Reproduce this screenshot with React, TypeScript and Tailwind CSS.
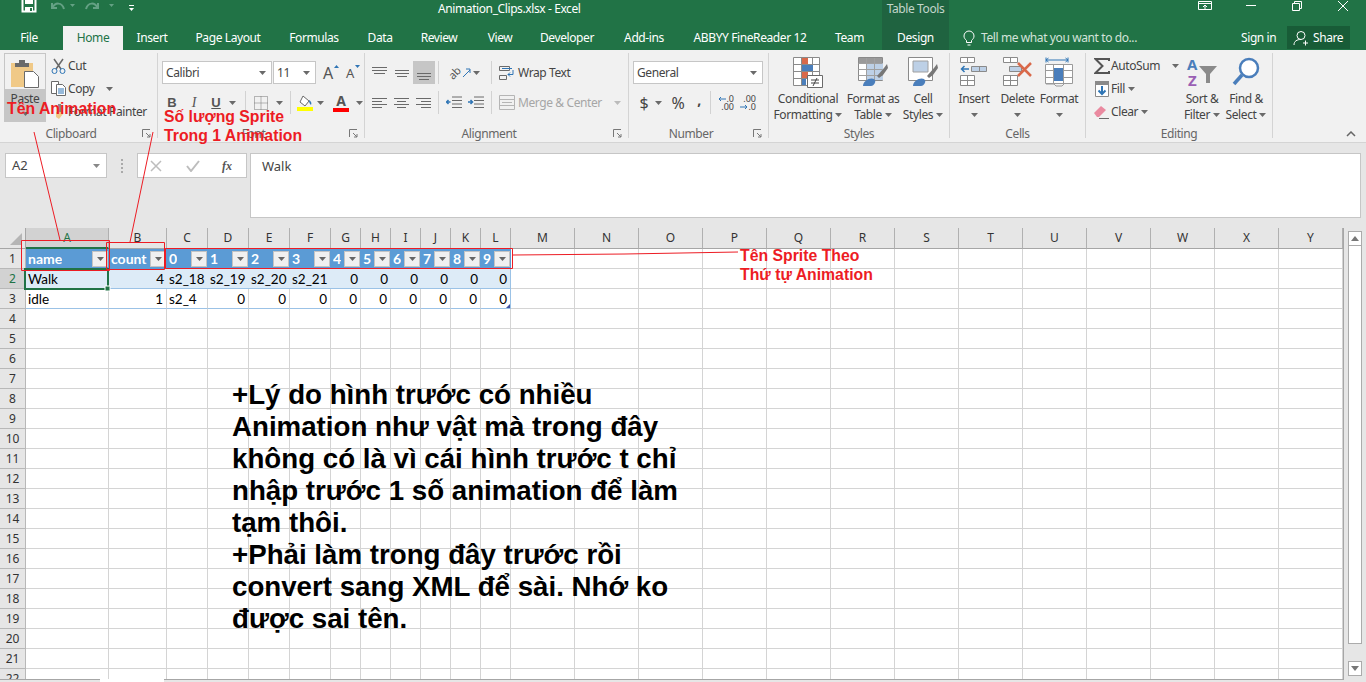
import type { ReactNode } from 'react';

const ui = "font-['Noto_Sans',sans-serif] tracking-[-0.4px]";
const liberation = "font-['Liberation_Sans',sans-serif] tracking-normal";
const columns = ['A','B','C','D','E','F','G','H','I','J','K','L','M','N','O','P','Q','R','S','T','U','V','W','X','Y'];
const tabs = [
  { label: 'Insert', w: 'w-[58px]' },
  { label: 'Page Layout', w: 'w-[94px]' },
  { label: 'Formulas', w: 'w-[78px]' },
  { label: 'Data', w: 'w-[54px]' },
  { label: 'Review', w: 'w-[64px]' },
  { label: 'View', w: 'w-[58px]' },
  { label: 'Developer', w: 'w-[76px]' },
  { label: 'Add-ins', w: 'w-[78px]' },
  { label: 'ABBYY FineReader 12', w: 'w-[134px]' },
  { label: 'Team', w: 'w-[65px]' },
];
const row2 = ['Walk', '4', 's2_18', 's2_19', 's2_20', 's2_21', '0', '0', '0', '0', '0', '0'];
const row3 = ['idle', '1', 's2_4', '0', '0', '0', '0', '0', '0', '0', '0', '0'];
const note = [
  '+Lý do hình trước có nhiều',
  'Animation như vật mà trong đây',
  'không có là vì cái hình trước t chỉ',
  'nhập trước 1 số animation để làm',
  'tạm thôi.',
  '+Phải làm trong đây trước rồi',
  'convert sang XML để sài. Nhớ ko',
  'được sai tên.',
];

function Caret({ color = '#6a6a6a' }: { color?: string }) {
  return (
    <svg width="7" height="4" viewBox="0 0 7 4" className="shrink-0">
      <path d="M0 0h7L3.500 4z" fill={color} />
    </svg>
  );
}

function Launcher() {
  return (
    <svg width="9" height="9" viewBox="0 0 9 9">
      <path d="M.5 8V.5H8M4 4l4 4M8 5v3H5" fill="none" stroke="#777" />
    </svg>
  );
}

function Lines({ rows, color = '#6a6a6a' }: { rows: number[][]; color?: string }) {
  return (
    <svg width="16" height="16" viewBox="0 0 16 16">
      {rows.map(([a, b, y]) => (
        <path key={`${a}-${y}`} d={`M${a} ${y}.5H${b}`} stroke={color} />
      ))}
    </svg>
  );
}

function Sep() {
  return <div className="w-px h-[23px] bg-[#d2d2d2] shrink-0" />;
}

function Group({ w, label, launcher = true, children }: { w: string; label: string; launcher?: boolean; children: ReactNode }) {
  return (
    <div className={`${w} h-[85px] flex flex-col border-r border-[#d4d4d4] shrink-0`}>
      <div className="h-[76px] flex shrink-0">{children}</div>
      <div className="h-[9px] flex items-center">
        <span className="flex-1 text-center text-[12px] leading-[12px] text-[#666]">{label}</span>
        {launcher && <span className="w-[14px] flex mr-[1px]"><Launcher /></span>}
      </div>
    </div>
  );
}

function BigButton({ w, icon, lines, caretOnly }: { w: string; icon: ReactNode; lines: string[]; caretOnly?: boolean }) {
  return (
    <div className={`${w} pt-[4px] flex flex-col items-center shrink-0 text-[12px] leading-[16px] text-[#444]`}>
      <div className="h-[34px] flex items-start justify-center">{icon}</div>
      {lines.map((t, i) => (
        <div key={t} className="flex items-center gap-[3px] whitespace-nowrap h-[16px]">
          {t}
          {i === lines.length - 1 && !caretOnly && <Caret />}
        </div>
      ))}
      {caretOnly && <div className="h-[16px] flex items-center"><Caret /></div>}
    </div>
  );
}

function SmallRow({ icon, label, caret, gap = 'ml-[3px]' }: { icon: ReactNode; label: string; caret?: boolean; gap?: string }) {
  return (
    <div className="h-[23px] flex items-center text-[12px] text-[#444] whitespace-nowrap">
      <span className="w-[19px] flex justify-center shrink-0">{icon}</span>
      {label}
      {caret && <span className={`${gap} flex`}><Caret /></span>}
    </div>
  );
}

function TableHead({ label }: { label: string }) {
  return (
    <div className="h-full bg-[#5b9bd5] flex items-center justify-between pl-[2px] pr-[1px] text-white font-bold text-[14px]">
      <span className="truncate leading-[17px] pb-[1px]">{label}</span>
      <span className="w-[16px] h-[16px] bg-[#f0f0f0] border border-[#c4c4c4] flex items-center justify-center shrink-0">
        <Caret color="#666" />
      </span>
    </div>
  );
}

export default function App() {
  return (
    <div className={`relative w-[1366px] h-[682px] overflow-hidden flex flex-col bg-white ${ui}`}>
      {/* title bar */}
      <div className="h-[26px] bg-[#217346] flex text-white text-[12px] shrink-0 overflow-hidden">
        <div className="w-[438px] flex items-start shrink-0">
          <svg width="16" height="14" viewBox="0 0 16 14" className="ml-[21px] -mt-[1px]">
            <path d="M1.500 0v12.500h13V0" fill="none" stroke="#fff" strokeWidth="2" />
            <path d="M4 0h8v5H4zM4 8h8v5H4z" fill="#fff" />
            <path d="M9 9h2v3H9z" fill="#217346" />
          </svg>
          <svg width="60" height="14" viewBox="0 0 60 14" className="ml-[12px]">
            <path d="M3 3v5h5M3.500 8C6 2 13 2 15 9" fill="none" stroke="#64a184" strokeWidth="2" />
            <path d="M21 4h5l-2.500 3z" fill="#64a184" />
            <path d="M49 3v5h-5M48.500 8C46 2 39 2 37 9" fill="none" stroke="#64a184" strokeWidth="2" />
          </svg>
          <svg width="30" height="14" viewBox="0 0 30 14" className="-ml-[1px]">
            <path d="M1 4h5L3.500 7z" fill="#64a184" />
            <path d="M21 5.500h5" stroke="#fff" />
            <path d="M21 8h5l-2.500 3z" fill="#fff" />
          </svg>
        </div>
        <div className="w-[444px] leading-[17px] shrink-0">Animation_Clips.xlsx - Excel</div>
        <div className="w-[67px] bg-[#1f6340] text-[#c3d6cb] text-center leading-[17px] shrink-0">Table Tools</div>
        <div className="flex-1 flex justify-end items-start">
          <svg width="168" height="12" viewBox="0 0 168 12">
            <path d="M.5 1.500h13v8H.5zM.5 3.500h13" fill="none" stroke="#fff" />
            <path d="M7 9V5M5 7l2-2 2 2" fill="none" stroke="#fff" />
            <path d="M48 5.500h10" stroke="#fff" />
            <path d="M94.500 3.500h7v7h-7zM96.500 3V1.500h7v7H102" fill="none" stroke="#fff" />
            <path d="M140 1l10 10M150 1l-10 10" stroke="#fff" />
          </svg>
        </div>
      </div>
      {/* tabs */}
      <div className="h-[24px] bg-[#217346] flex text-white text-[12px] shrink-0">
        <div className="w-[63px] pr-[5px] text-center leading-[24px] shrink-0">File</div>
        <div className="w-[60px] bg-[#f1f1f1] text-[#217346] text-center leading-[24px] shrink-0">Home</div>
        {tabs.map(t => (
          <div key={t.label} className={`${t.w} text-center leading-[24px] whitespace-nowrap shrink-0`}>{t.label}</div>
        ))}
        <div className="w-[67px] bg-[#1f6340] text-center leading-[24px] shrink-0">Design</div>
        <div className="flex items-center pl-[13px] text-[#d3e3da] w-[292px] shrink-0">
          <svg width="14" height="16" viewBox="0 0 14 16" className="mr-[5px]">
            <path d="M4.500 10.500C3 9 2 8 2 6a5 5 0 0 1 10 0c0 2-1 3-2.500 4.500v2h-5zM5.500 15h3" fill="none" stroke="#fff" />
          </svg>
          Tell me what you want to do...
        </div>
        <div className="w-[46px] leading-[24px] whitespace-nowrap shrink-0">Sign in</div>
        <div className="w-[63px] h-[23px] bg-[#185c37] flex items-center pl-[6px] gap-[4px] shrink-0">
          <svg width="16" height="16" viewBox="0 0 16 16">
            <circle cx="8" cy="5.500" r="4" fill="none" stroke="#fff" />
            <path d="M1 15c0-4 3-5.500 7-5.500M10 13h5M12.500 10.500v5" fill="none" stroke="#fff" />
          </svg>
          Share
        </div>
      </div>
      {/* ribbon */}
      <div className="h-[93px] bg-[#f1f1f1] border-b border-[#d4d4d4] flex pt-[3px] shrink-0">
        <Group w="w-[158px]" label="Clipboard">
          <div className="ml-[4px] w-[42px] h-[69px] border border-[#c6c6c6] flex flex-col shrink-0">
            <div className="h-[35px] flex justify-center pt-[4px]">
              <svg width="30" height="30" viewBox="0 0 30 30">
                <path d="M1 5h22v24H1z" fill="#f0c987" />
                <path d="M5 5h14v4H5zM9 2h6v4H9z" fill="#6a6a6a" />
                <path d="M14.500 13.500h9l5 5v11h-14z" fill="#fff" stroke="#6a6a6a" />
              </svg>
            </div>
            <div className="flex-1 bg-[#c6c6c6] text-[12px] text-[#444] flex flex-col items-center leading-[18px] pt-[1px]">
              Paste
              <div className="mt-[4px]"><Caret /></div>
            </div>
          </div>
          <div className="ml-[3px] pt-[1px]">
            <SmallRow
              label="Cut"
              icon={
                <svg width="15" height="16" viewBox="0 0 15 16">
                  <path d="M3 1l7 10M12 1L5 11" stroke="#6a6a6a" strokeWidth="1.500" fill="none" />
                  <circle cx="3.500" cy="13" r="2.500" fill="none" stroke="#2f75b5" />
                  <circle cx="11.500" cy="13" r="2.500" fill="none" stroke="#2f75b5" />
                </svg>
              }
            />
            <SmallRow
              label="Copy"
              caret
              gap="ml-[11px]"
              icon={
                <svg width="15" height="15" viewBox="0 0 15 15">
                  <path d="M.5.500h7v12h-7z" fill="#fff" stroke="#6a6a6a" />
                  <path d="M5.500 3.500h6l3 3v8h-9z" fill="#fff" stroke="#6a6a6a" />
                  <path d="M7 8h6M7 10h6M7 12h6" stroke="#2f75b5" />
                </svg>
              }
            />
            <SmallRow
              label="Format Painter"
              icon={
                <svg width="12" height="15" viewBox="0 0 12 15">
                  <path d="M3 8h7v2l-4 5-3-2z" fill="#f0c987" />
                  <path d="M5 0h3v8H5z" fill="#8a8a8a" />
                </svg>
              }
            />
          </div>
        </Group>
        <Group w="w-[207px]" label="Font">
          <div className="pt-[8px] pl-[4px]">
            <div className="flex items-center">
              <div className="w-[110px] h-[23px] bg-white border border-[#c6c6c6] flex items-center justify-between pl-[3px] pr-[5px] text-[12px] text-[#444]">Calibri<Caret /></div>
              <div className="w-[43px] h-[23px] ml-px bg-white border border-[#c6c6c6] flex items-center justify-between pl-[3px] pr-[5px] text-[12px] text-[#444]">11<Caret /></div>
              <div className="relative w-[22px] ml-[1px] text-center text-[#555] text-[16px] leading-[22px]">A
                <svg width="5" height="3" viewBox="0 0 5 3" className="absolute right-[0px] top-[3px]"><path d="M0 3h5L2.500 0z" fill="#2f75b5" /></svg>
              </div>
              <div className="relative w-[22px] text-center text-[#555] text-[13px] leading-[22px]">A
                <svg width="5" height="3" viewBox="0 0 5 3" className="absolute right-[1px] top-[3px]"><path d="M0 0h5L2.500 3z" fill="#2f75b5" /></svg>
              </div>
            </div>
            <div className="flex items-center mt-[7px] h-[23px] text-[#555]">
              <span className={`w-[22px] ml-[-1px] text-center text-[13px] font-bold ${liberation}`}>B</span>
              <span className="w-[22px] text-center text-[14px] italic font-['Liberation_Serif',serif]">I</span>
              <span className={`w-[22px] text-center text-[13px] font-bold underline ${liberation}`}>U</span>
              <span className="w-[14px] pl-[2px] flex"><Caret /></span>
              <span className="ml-[4px]"><Sep /></span>
              <span className="w-[26px] ml-[2px] flex justify-center">
                <svg width="14" height="14" viewBox="0 0 14 14">
                  <path d="M.5.500h13v13H.5zM7 .5v13M.5 7h13" fill="none" stroke="#777" strokeDasharray="1 1" />
                </svg>
              </span>
              <span className="w-[14px] pl-[2px] flex"><Caret /></span>
              <span className="ml-[2px]"><Sep /></span>
              <span className="w-[24px] ml-[2px] flex justify-center">
                <svg width="16" height="16" viewBox="0 0 16 16">
                  <path d="M6 1l6 5-4 5-5-4z" fill="#fff" stroke="#6a6a6a" />
                  <path d="M12 5c2 1 3 3 2 5-1-1-2-2-2-5z" fill="#2f75b5" />
                  <path d="M0 12h16v4H0z" fill="#ffff00" />
                </svg>
              </span>
              <span className="w-[12px] flex"><Caret /></span>
              <span className="w-[22px] ml-[1px] flex flex-col items-center text-[14px] leading-[13px] font-bold">
                A
                <span className="w-[16px] h-[4px] bg-[#ff0000] mt-[1px]" />
              </span>
              <span className="ml-[4px] flex"><Caret /></span>
            </div>
          </div>
        </Group>
        <Group w="w-[264px]" label="Alignment">
          <div className="pt-[8px] pl-[4px]">
            <div className="flex items-center h-[23px]">
              <span className="w-[22px] flex justify-center"><Lines rows={[[0,15,2],[0,15,5],[2,13,8]]} /></span>
              <span className="w-[22px] flex justify-center"><Lines rows={[[1,15,5],[1,15,8],[3,13,11]]} /></span>
              <span className="w-[22px] h-[23px] bg-[#c6c6c6] flex justify-center items-center"><Lines rows={[[1,15,8],[1,15,11],[3,13,14]]} /></span>
              <span className="ml-[3px]"><Sep /></span>
              <span className="w-[17px] ml-[7px] h-[16px] flex items-center justify-center -rotate-45 text-[11px] leading-[10px] text-[#555]">ab</span>
              <svg width="8" height="10" viewBox="0 0 8 10"><path d="M0 9l7-7M3 1h4v4" fill="none" stroke="#2f75b5" /></svg>
              <span className="ml-[2px] flex"><Caret /></span>
              <span className="ml-[11px]"><Sep /></span>
              <span className="ml-[7px] flex items-center text-[12px] text-[#444] whitespace-nowrap gap-[3px]">
                <svg width="16" height="16" viewBox="0 0 16 16">
                  <path d="M.5 1.500h10v4H.5zM.5 10.500h7v4h-7z" fill="none" stroke="#6a6a6a" />
                  <path d="M3 3.500h10M14 5v4.500H9M11 7.500l-2 2 2 2" fill="none" stroke="#2f75b5" />
                </svg>
                Wrap Text
              </span>
            </div>
            <div className="flex items-center h-[23px] mt-[7px]">
              <span className="w-[22px] flex justify-center"><Lines rows={[[0,15,3],[0,10,6],[0,15,9],[0,10,12]]} /></span>
              <span className="w-[22px] flex justify-center"><Lines rows={[[0,15,3],[3,12,6],[0,15,9],[3,12,12]]} /></span>
              <span className="w-[22px] flex justify-center"><Lines rows={[[0,15,3],[5,15,6],[0,15,9],[5,15,12]]} /></span>
              <span className="ml-[3px]"><Sep /></span>
              <span className="ml-[7px] flex">
                <svg width="16" height="14" viewBox="0 0 16 14">
                  <path d="M6 1h10M6 4.500h10M6 8h10M6 11.500h10" stroke="#6a6a6a" />
                  <path d="M0 6h4.500M2.500 4L.5 6l2 2" fill="none" stroke="#2f75b5" strokeWidth="1.500" />
                </svg>
              </span>
              <span className="ml-[6px] flex">
                <svg width="16" height="14" viewBox="0 0 16 14">
                  <path d="M6 1h10M6 4.500h10M6 8h10M6 11.500h10" stroke="#6a6a6a" />
                  <path d="M0 6h4.500M2.500 4l2 2-2 2" fill="none" stroke="#2f75b5" strokeWidth="1.500" />
                </svg>
              </span>
              <span className="ml-[7px]"><Sep /></span>
              <span className="ml-[7px] flex items-center text-[12px] text-[#a6a6a6] whitespace-nowrap gap-[3px]">
                <svg width="16" height="15" viewBox="0 0 16 15">
                  <path d="M.5.500h15v14H.5zM.5 4.500h15M.5 10.500h15" fill="none" stroke="#b5b5b5" />
                  <path d="M3 7.500h10" stroke="#b5b5b5" />
                </svg>
                Merge &amp; Center
                <span className="ml-[9px] flex"><Caret color="#bbb" /></span>
              </span>
            </div>
          </div>
        </Group>
        <Group w="w-[140px]" label="Number">
          <div className="pt-[8px] pl-[4px]">
            <div className="w-[130px] h-[23px] bg-white border border-[#c6c6c6] flex items-center justify-between pl-[3px] pr-[5px] text-[12px] text-[#444]">General<Caret /></div>
            <div className="flex items-center h-[23px] mt-[7px] text-[#444]">
              <span className="w-[16px] ml-[3px] text-center text-[16px]">$</span>
              <span className="ml-[3px] flex"><Caret /></span>
              <span className="w-[18px] ml-[7px] text-center text-[16px]">%</span>
              <span className="w-[10px] ml-[7px] text-center font-bold text-[14px] leading-[14px] -mt-[6px]">,</span>
              <span className="ml-[6px]"><Sep /></span>
              <span className="ml-[7px] w-[16px] relative text-[9px] leading-[8px] text-right text-[#444] tracking-normal">
                <svg width="8" height="6" viewBox="0 0 8 6" className="absolute left-0 top-[1px]"><path d="M8 3H1M3 1L1 3l2 2" fill="none" stroke="#2f75b5" /></svg>
                <div>.0</div><div>.00</div>
              </span>
              <span className="ml-[6px] w-[16px] relative text-[9px] leading-[8px] text-right text-[#444] tracking-normal">
                <svg width="8" height="6" viewBox="0 0 8 6" className="absolute left-0 bottom-[1px]"><path d="M0 3h7M5 1l2 2-2 2" fill="none" stroke="#2f75b5" /></svg>
                <div>.00</div><div>.0</div>
              </span>
            </div>
          </div>
        </Group>
        <Group w="w-[181px]" label="Styles" launcher={false}>
          <BigButton
            w="w-[78px]"
            lines={['Conditional', 'Formatting']}
            icon={
              <svg width="30" height="31" viewBox="0 0 30 31">
                <path d="M.5.500h26v28H.5zM.5 7.500h26M.5 14.500h26M.5 21.500h26M8.500.5v28M19.500.5v28" fill="#fff" stroke="#8a8a8a" />
                <path d="M9 1h6v6H9zM9 15h6v6H9z" fill="#d9694a" />
                <path d="M9 8h11v6H9zM9 22h4v6H9z" fill="#4a7ebb" />
                <path d="M14.500 18.500h15v12h-15z" fill="#fff" stroke="#6a6a6a" />
                <path d="M18 23h8M18 26h8M24 21l-4 8" fill="none" stroke="#444" />
              </svg>
            }
          />
          <BigButton
            w="w-[52px]"
            lines={['Format as', 'Table']}
            icon={
              <svg width="30" height="30" viewBox="0 0 30 30">
                <path d="M.5 .5h24v23H.5z" fill="#fff" stroke="#8a8a8a" />
                <path d="M1 1h23v5H1z" fill="#9a9a9a" />
                <path d="M8 6h17v17H8z" fill="#bdd0e6" />
                <path d="M.5 6.500h24M.5 12.500h24M.5 18.500h24M8.500 1v22M16.500 1v22" stroke="#a0a0a0" fill="none" />
                <path d="M19 19l7-8 3-4 1 4-5 7-4 3z" fill="#777" />
                <path d="M5 29c0-5 7-9 11-7 3 2 0 7-3 7z" fill="#4a7ebb" />
              </svg>
            }
          />
          <BigButton
            w="w-[48px]"
            lines={['Cell', 'Styles']}
            icon={
              <svg width="30" height="30" viewBox="0 0 30 30">
                <path d="M.5 .5h24v23H.5z" fill="#fff" stroke="#8a8a8a" />
                <path d="M5 4h15v11H5z" fill="#bdd0e6" stroke="#a0a0a0" />
                <path d="M19 19l7-8 3-4 1 4-5 7-4 3z" fill="#777" />
                <path d="M5 29c0-5 7-9 11-7 3 2 0 7-3 7z" fill="#4a7ebb" />
              </svg>
            }
          />
        </Group>
        <Group w="w-[136px]" label="Cells" launcher={false}>
          <BigButton
            w="w-[48px]"
            lines={['Insert']}
            caretOnly
            icon={
              <svg width="28" height="30" viewBox="0 0 28 30">
                <path d="M.5.500h14v5H.5zM7.500.5v5M.5 18.500h14v10H.5zM.5 23.500h14M7.500 18.500v10" fill="#fff" stroke="#8a8a8a" />
                <path d="M11.500 9.500h15v5h-15zM19.500 9.500v5" fill="#bdd0e6" stroke="#8a8a8a" />
                <path d="M9 12H2M4.500 9L1.500 12l3 3" fill="none" stroke="#2f75b5" strokeWidth="1.500" />
              </svg>
            }
          />
          <BigButton
            w="w-[39px]"
            lines={['Delete']}
            caretOnly
            icon={
              <svg width="30" height="30" viewBox="0 0 30 30">
                <path d="M.5.500h14v5H.5zM7.500.5v5M.5 18.500h14v10H.5zM.5 23.500h14M7.500 18.500v10" fill="#fff" stroke="#8a8a8a" />
                <path d="M6.500 9.500h12v5h-12z" fill="#bdd0e6" stroke="#8a8a8a" />
                <path d="M15 6l13 13M28 6L15 19" stroke="#d9694a" strokeWidth="2.500" />
              </svg>
            }
          />
          <BigButton
            w="w-[44px]"
            lines={['Format']}
            caretOnly
            icon={
              <svg width="28" height="30" viewBox="0 0 28 30">
                <path d="M1 3h22M1 .5v5M23 .5v5M3.500 1L1 3l2.500 2M20.500 1L23 3l-2.500 2" fill="none" stroke="#2f75b5" />
                <path d="M.5 7.500h27v19H.5zM.5 13.500h27M.5 20.500h27M8.500 7.500v19M18.500 7.500v19" fill="#fff" stroke="#9a9a9a" />
                <path d="M9 11h9v13H9z" fill="#4a7ebb" />
                <path d="M1 27h8l2 2h6l2-2" fill="none" stroke="#9a9a9a" />
              </svg>
            }
          />
        </Group>
        <Group w="w-[187px]" label="Editing" launcher={false}>
          <div className="w-[94px] pl-[6px] pt-[1px] shrink-0">
            <SmallRow
              label="AutoSum"
              caret
              gap="ml-[12px]"
              icon={
                <svg width="16" height="16" viewBox="0 0 16 16">
                  <path d="M15 3V1H1.500l7 7-7 7H15v-2" fill="none" stroke="#555" strokeWidth="2" />
                </svg>
              }
            />
            <SmallRow
              label="Fill"
              caret
              icon={
                <svg width="14" height="16" viewBox="0 0 14 16">
                  <path d="M.5.500h13v15H.5z" fill="#fff" stroke="#8a8a8a" />
                  <path d="M0 0h14v4H0z" fill="#8a8a8a" />
                  <path d="M7 5v8M3.500 9.500L7 13l3.500-3.500" fill="none" stroke="#2f75b5" strokeWidth="2" />
                </svg>
              }
            />
            <SmallRow
              label="Clear"
              caret
              icon={
                <svg width="15" height="14" viewBox="0 0 15 14">
                  <path d="M0 8l7-7 5 4-7 7H3z" fill="#ea8aa0" />
                  <path d="M5 13.500h10" stroke="#6a6a6a" />
                </svg>
              }
            />
          </div>
          <BigButton
            w="w-[44px]"
            lines={['Sort &', 'Filter']}
            icon={
              <svg width="30" height="30" viewBox="0 0 30 30" className="overflow-visible">
                <text x="0" y="13" fontSize="15" fontWeight="700" fill="#4a7ebb" fontFamily="Noto Sans">A</text>
                <text x="1" y="29" fontSize="15" fontWeight="700" fill="#9a5fb4" fontFamily="Noto Sans">Z</text>
                <path d="M12 9h18l-7 8v9h-4v-9z" fill="#8a8a8a" />
              </svg>
            }
          />
          <BigButton
            w="w-[44px]"
            lines={['Find &', 'Select']}
            icon={
              <svg width="28" height="30" viewBox="0 0 28 30">
                <circle cx="17" cy="11" r="9" fill="#fff" stroke="#4a7ebb" strokeWidth="2.500" />
                <path d="M10 18L2 27" stroke="#4a7ebb" strokeWidth="3.500" />
              </svg>
            }
          />
        </Group>
        <div className="flex-1 flex items-end justify-end pr-[10px] pb-[5px]">
          <svg width="10" height="6" viewBox="0 0 10 6"><path d="M1 5l4-4 4 4" fill="none" stroke="#666" strokeWidth="1.500" /></svg>
        </div>
      </div>
      {/* formula bar */}
      <div className="h-[85px] bg-[#e6e6e6] flex pt-[10px] pl-[5px] pr-[5px] shrink-0 text-[#444] text-[13px] tracking-normal">
        <div className="w-[102px] h-[25px] bg-white border border-[#c6c6c6] flex items-center justify-between pl-[6px] pr-[6px]">A2<Caret color="#888" /></div>
        <div className="w-[30px] h-[25px] flex flex-col items-center justify-center gap-[2px]">
          <span className="w-[2px] h-[2px] bg-[#aaa]" />
          <span className="w-[2px] h-[2px] bg-[#aaa]" />
          <span className="w-[2px] h-[2px] bg-[#aaa]" />
          <span className="w-[2px] h-[2px] bg-[#aaa]" />
        </div>
        <div className="w-[110px] h-[25px] bg-white border border-[#c6c6c6] flex items-center">
          <span className="w-[36px] flex justify-center">
            <svg width="12" height="12" viewBox="0 0 12 12"><path d="M1 1l10 10M11 1L1 11" stroke="#bdbdbd" strokeWidth="1.500" /></svg>
          </span>
          <span className="w-[38px] flex justify-center">
            <svg width="14" height="12" viewBox="0 0 14 12"><path d="M1 6l4 5 8-10" fill="none" stroke="#bdbdbd" strokeWidth="2" /></svg>
          </span>
          <span className="w-[30px] text-center italic font-bold text-[12px] text-[#555] font-['Liberation_Serif',serif]">fx</span>
        </div>
        <div className="w-[1111px] h-[65px] ml-[3px] bg-white border border-[#c6c6c6] pl-[11px] pt-[3px] leading-[18px]">Walk</div>
      </div>
      {/* sheet */}
      <div className="flex-1 flex min-h-0">
        <div className="w-[1344px] h-[451px] border-r border-[#a6a6a6] overflow-hidden shrink-0">
          <div className="grid grid-cols-[26px_83px_58px_repeat(4,41px)_repeat(6,30px)_repeat(13,64px)] grid-rows-[21px] auto-rows-[20px] font-['Lato',sans-serif] text-[13.500px] text-black tracking-normal">
            <div className="bg-[#e6e6e6] border-r border-b border-[#a6a6a6] flex items-end justify-end pr-[3px] pb-[3px]">
              <svg width="12" height="12" viewBox="0 0 12 12"><path d="M12 0v12H0z" fill="#b5b5b5" /></svg>
            </div>
            {columns.map((c, i) => (
              <div key={c} className={`border-r border-[#b0b0b0] flex items-center justify-center text-[12px] font-['Noto_Sans',sans-serif] ${i === 0 ? 'bg-[#d2d2d2] text-[#217346] border-b-2 border-b-[#217346]' : 'bg-[#e6e6e6] text-[#333] border-b border-b-[#a6a6a6]'}`}>{c}</div>
            ))}
            {Array.from({ length: 22 }, (_, r) => [
              <div key={`h${r}`} className={`border-r border-b border-[#b8b8b8] flex items-center justify-center text-[12px] font-['Noto_Sans',sans-serif] ${r === 1 ? 'bg-[#d2d2d2] text-[#217346]' : 'bg-[#e6e6e6] text-[#333]'}`}>{r + 1}</div>,
              ...columns.map((c, i) => {
                if (r === 0 && i < 12) {
                  return <TableHead key={c} label={i === 0 ? 'name' : i === 1 ? 'count' : String(i - 2)} />;
                }
                if ((r === 1 || r === 2) && i < 12) {
                  const value = (r === 1 ? row2 : row3)[i];
                  const isText = i === 0 || /s2/.test(value);
                  return (
                    <div
                      key={c}
                      className={`flex items-center pl-[2px] pr-[3px] pt-[2px] border-b border-[#9bc2e6] overflow-visible whitespace-nowrap ${isText ? 'justify-start' : 'justify-end'} ${r === 1 ? 'bg-[#ddebf7]' : ''} ${i === 11 ? 'border-r border-r-[#9bc2e6]' : r === 2 ? 'border-r border-r-[#d4d4d4]' : ''}`}
                    >
                      {value}
                    </div>
                  );
                }
                return <div key={c} className="border-r border-b border-[#d4d4d4]" />;
              }),
            ])}
          </div>
        </div>
        <div className="flex-1 bg-[#e6e6e6] pt-[3px] pl-[4px] pr-[4px] flex flex-col items-stretch">
          <div className="h-[15px] bg-white border border-[#ababab] flex items-center justify-center"><svg width="8" height="5" viewBox="0 0 8 5"><path d="M0 5h8L4 0z" fill="#777" /></svg></div>
          <div className="h-[398px] bg-white border border-[#ababab] border-t-0" />
          <div className="flex-1" />
          <div className="h-[15px] bg-white border border-[#ababab] flex items-center justify-center mb-[3px]"><svg width="8" height="5" viewBox="0 0 8 5"><path d="M0 0h8L4 5z" fill="#777" /></svg></div>
        </div>
      </div>
      {/* sheet tabs, only their top edge is on screen */}
      <div className="h-[3px] bg-[#e6e6e6] flex shrink-0">
        <div className="w-[100px] border-t border-[#a6a6a6]" />
        <div className="w-[64px] bg-white" />
        <div className="w-[1180px] border-t border-[#a6a6a6]" />
      </div>

      {/* green selection and red notes drawn on top of the sheet */}
      <svg className="absolute left-0 top-0 pointer-events-none" width="1366" height="682" viewBox="0 0 1366 682">
        <path d="M25 269h83v20H25z" fill="none" stroke="#217346" strokeWidth="2" />
        <path d="M105 286h5v5h-5z" fill="#217346" stroke="#fff" />
        <path d="M506 308h4v-4z" fill="#3f51a5" />
        <g fill="none" stroke="#ed1c24">
          <path d="M21.500 240.500h88v30h-88zM106.500 242.500h58v27h-58zM165.500 248.500h347v20h-347z" />
          <path d="M34 132l26 108M153 132l-23 110M513 255l112-1 113-2" />
        </g>
      </svg>
      <div className={`absolute left-[7px] top-[99px] text-[15.800px] leading-[19px] font-bold text-[#ed1c24] ${liberation}`}>Tên Animation</div>
      <div className={`absolute left-[164px] top-[107px] text-[15.800px] leading-[19px] font-bold text-[#ed1c24] ${liberation}`}>Số lượng Sprite<br />Trong 1 Animation</div>
      <div className={`absolute left-[740px] top-[246px] text-[15.800px] leading-[19px] font-bold text-[#ed1c24] ${liberation}`}>Tên Sprite Theo<br />Thứ tự Animation</div>
      <div className={`absolute left-[232px] top-[379px] text-[27.700px] leading-[32px] font-bold text-black whitespace-nowrap ${liberation}`}>
        {note.map(line => <div key={line}>{line}</div>)}
      </div>
    </div>
  );
}
